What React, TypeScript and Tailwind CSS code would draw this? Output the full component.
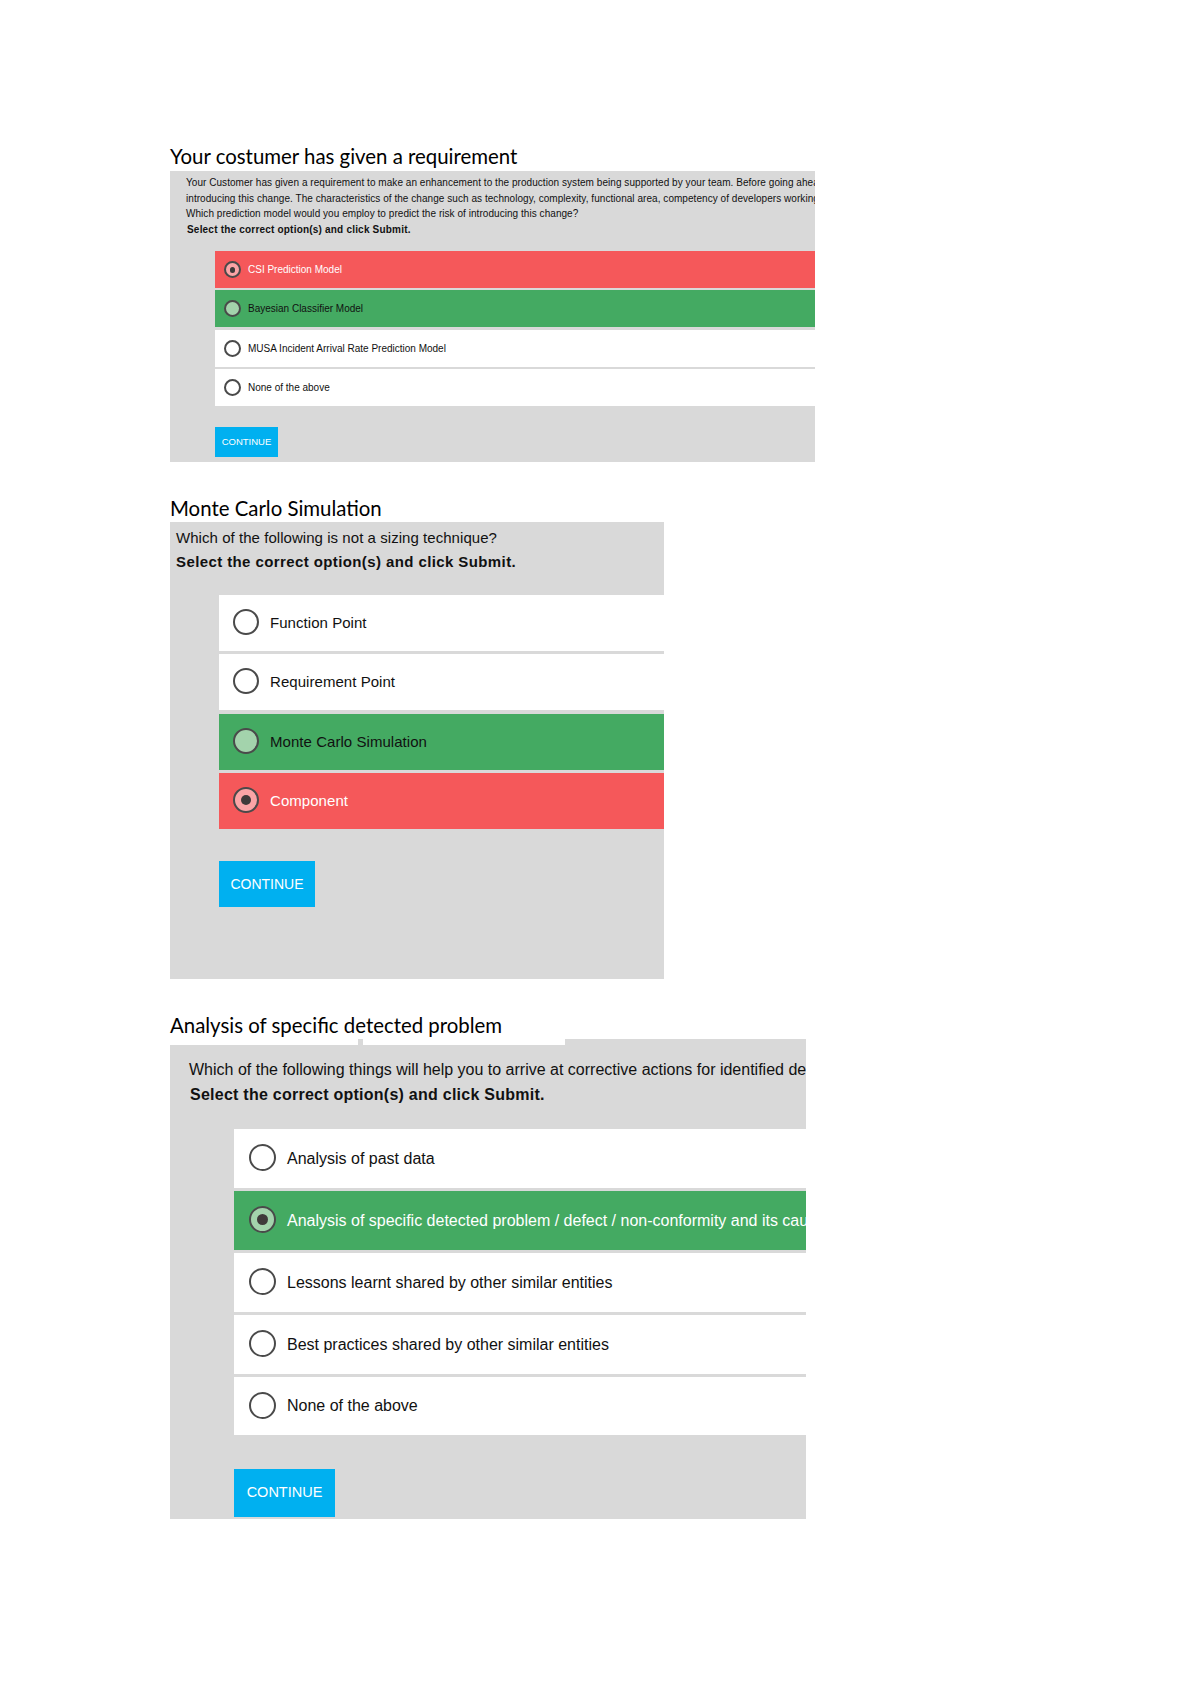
import React from 'react';

type Status = 'none' | 'right' | 'wrong';

interface Option {
  label: string;
  status: Status;
  checked?: boolean;
  dark?: boolean;
  rowClass: string;
}

const Radio = ({ status, checked, size }: { status: Status; checked?: boolean; size: string }) => {
  const fill = status === 'right' ? 'bg-[#a3d3ac]' : status === 'wrong' ? 'bg-[#fba4a6]' : 'bg-white';
  return (
    <span className={`${size} ${fill} shrink-0 rounded-full border-[#4a4a4a] flex items-center justify-center`}>
      {checked && <span className="w-[45%] h-[45%] rounded-full bg-[#3f3a3a]" />}
    </span>
  );
};

const rowBg = (status: Status) =>
  status === 'right' ? 'bg-[#44aa62]' : status === 'wrong' ? 'bg-[#f5585a]' : 'bg-white';

const rowText = (o: Option) =>
  o.status === 'wrong' || (o.status === 'right' && !o.dark) ? 'text-white' : 'text-[#111]';

const firstOptions: Option[] = [
  { label: 'CSI Prediction Model', status: 'wrong', checked: true, rowClass: 'h-[37px]' },
  { label: 'Bayesian Classifier Model', status: 'right', dark: true, rowClass: 'h-[37px] mt-[2px]' },
  { label: 'MUSA Incident Arrival Rate Prediction Model', status: 'none', rowClass: 'h-[37px] mt-[3px]' },
  { label: 'None of the above', status: 'none', rowClass: 'h-[37px] mt-[2px]' },
];

const secondOptions: Option[] = [
  { label: 'Function Point', status: 'none', rowClass: 'h-[56px]' },
  { label: 'Requirement Point', status: 'none', rowClass: 'h-[56px] mt-[3px]' },
  { label: 'Monte Carlo Simulation', status: 'right', dark: true, rowClass: 'h-[56px] mt-[4px]' },
  { label: 'Component', status: 'wrong', checked: true, rowClass: 'h-[56px] mt-[3px]' },
];

const thirdOptions: Option[] = [
  { label: 'Analysis of past data', status: 'none', rowClass: 'h-[59px]' },
  { label: 'Analysis of specific detected problem / defect / non-conformity and its causes', status: 'right', checked: true, rowClass: 'h-[59px] mt-[3px]' },
  { label: 'Lessons learnt shared by other similar entities', status: 'none', rowClass: 'h-[59px] mt-[3px]' },
  { label: 'Best practices shared by other similar entities', status: 'none', rowClass: 'h-[59px] mt-[3px]' },
  { label: 'None of the above', status: 'none', rowClass: 'h-[58px] mt-[3px]' },
];

const OptionList = ({ options, rowPad, radio, text }: { options: Option[]; rowPad: string; radio: string; text: string }) => (
  <div>
    {options.map(o => (
      <div key={o.label} className={`${o.rowClass} ${rowBg(o.status)} ${rowPad} flex items-center whitespace-nowrap overflow-hidden`}>
        <Radio status={o.status} checked={o.checked} size={radio} />
        <span className={`${text} ${rowText(o)}`}>{o.label}</span>
      </div>
    ))}
  </div>
);

export default function App() {
  return (
    <div className="min-h-[1684px] bg-white pt-[141px] font-['Liberation_Sans',Arial,sans-serif] text-[#111]">
      <h2 className="ml-[170px] h-[30px] leading-[30px] text-[20.4px] font-['Lato',sans-serif] text-black">
        Your costumer has given a requirement
      </h2>
      <section className="ml-[170px] w-[645px] h-[291px] bg-[#d9d9d9] overflow-hidden pt-[4px]">
        <div className="pl-[16px] text-[10px] tracking-[0.05px] leading-[15.6px] whitespace-nowrap">
          <p>Your Customer has given a requirement to make an enhancement to the production system being supported by your team. Before going ahead with</p>
          <p>introducing this change. The characteristics of the change such as technology, complexity, functional area, competency of developers working on it</p>
          <p>Which prediction model would you employ to predict the risk of introducing this change?</p>
          <p className="font-bold ml-[1px] tracking-[0.2px]">Select the correct option(s) and click Submit.</p>
        </div>
        <div className="ml-[45px] mt-[14px]">
          <OptionList options={firstOptions} rowPad="pl-[9px]" radio="w-[17px] h-[17px] border-[2px]" text="ml-[7px] text-[10px]" />
          <button className="mt-[21px] block w-[63px] h-[30px] bg-[#00b0f0] text-white text-[9.5px]">CONTINUE</button>
        </div>
      </section>

      <h2 className="mt-[32px] ml-[170px] h-[28px] leading-[28px] text-[20.4px] font-['Lato',sans-serif] text-black">
        Monte Carlo Simulation
      </h2>
      <section className="ml-[170px] w-[494px] h-[457px] bg-[#d9d9d9] overflow-hidden pt-[4px]">
        <div className="pl-[6px] text-[15px] tracking-[0.05px] leading-[24px] whitespace-nowrap">
          <p>Which of the following is not a sizing technique?</p>
          <p className="font-bold tracking-[0.4px]">Select the correct option(s) and click Submit.</p>
        </div>
        <div className="ml-[49px] mt-[21px]">
          <OptionList options={secondOptions} rowPad="pl-[14px]" radio="w-[26px] h-[26px] border-[2.5px] -mt-[2px]" text="ml-[11px] text-[15px] tracking-[0.05px]" />
          <button className="mt-[32px] block w-[96px] h-[46px] bg-[#00b0f0] text-white text-[14px]">CONTINUE</button>
        </div>
      </section>

      <h2 className="mt-[32px] ml-[170px] h-[28px] leading-[28px] text-[20.4px] font-['Lato',sans-serif] text-black">
        Analysis of specific detected problem
      </h2>
      <section className="relative ml-[170px] w-[636px] h-[480px] bg-[#d9d9d9] overflow-hidden pt-[18px]">
        <span className="absolute left-0 top-0 w-[188px] h-[6px] bg-white" />
        <span className="absolute left-[193px] top-0 w-[202px] h-[6px] bg-white" />
        <div className="pl-[19px] text-[16px] leading-[25px] whitespace-nowrap">
          <p>Which of the following things will help you to arrive at corrective actions for identified defects?</p>
          <p className="font-bold ml-[1px] tracking-[0.25px]">Select the correct option(s) and click Submit.</p>
        </div>
        <div className="ml-[64px] mt-[22px]">
          <OptionList options={thirdOptions} rowPad="pl-[15px]" radio="w-[27px] h-[27px] border-[2.5px] -mt-[2px]" text="ml-[11px] text-[16px]" />
          <button className="mt-[34px] block w-[101px] h-[48px] bg-[#00b0f0] text-white text-[14.5px]">CONTINUE</button>
        </div>
      </section>
    </div>
  );
}
